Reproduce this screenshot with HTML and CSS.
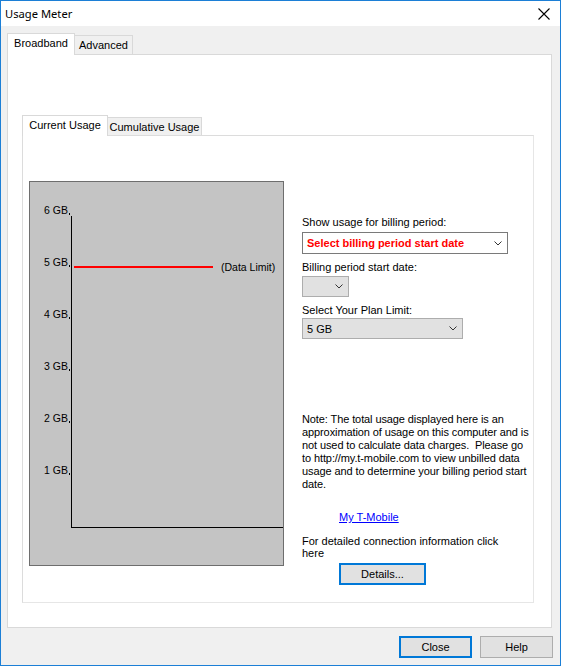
FILE: index.html
```html
<!DOCTYPE html>
<html>
<head>
<meta charset="utf-8">
<title>Usage Meter</title>
<link rel="stylesheet" href="styles.css">
</head>
<body>
<div class="window">
  <div class="titlebar">
    <span class="title">Usage Meter</span>
    <svg class="close-x" width="12" height="12" viewBox="0 0 12 12"><path d="M0.5 0.5 L11.5 11.5 M11.5 0.5 L0.5 11.5" stroke="#000" stroke-width="1.1" fill="none"/></svg>
  </div>
  <div class="client">
    <div class="tabstrip outer-tabs">
      <div class="tab selected">Broadband</div>
      <div class="tab">Advanced</div>
    </div>
    <div class="outer-panel">
      <div class="tabstrip inner-tabs">
        <div class="tab selected">Current Usage</div>
        <div class="tab">Cumulative Usage</div>
      </div>
      <div class="inner-panel">
        <div class="chart">
          <svg class="chart-svg" width="253" height="383" viewBox="0 0 253 383">
            <g class="axis-labels">
              <text x="38" y="32" text-anchor="end">6 GB</text>
              <text x="38" y="84" text-anchor="end">5 GB</text>
              <text x="38" y="136" text-anchor="end">4 GB</text>
              <text x="38" y="188" text-anchor="end">3 GB</text>
              <text x="38" y="240" text-anchor="end">2 GB</text>
              <text x="38" y="292" text-anchor="end">1 GB</text>
            </g>
            <g fill="#000">
              <rect x="39" y="31" width="1" height="2"/>
              <rect x="39" y="83" width="1" height="2"/>
              <rect x="39" y="135" width="1" height="2"/>
              <rect x="39" y="187" width="1" height="2"/>
              <rect x="39" y="239" width="1" height="2"/>
              <rect x="39" y="291" width="1" height="2"/>
              <rect x="41" y="34" width="1" height="312"/>
              <rect x="41" y="345" width="212" height="1"/>
            </g>
            <rect x="44" y="84" width="139" height="2" fill="#ff0000"/>
            <text class="limit-label" x="191" y="89">(Data Limit)</text>
          </svg>
        </div>
        <div class="side">
          <div class="label l1">Show usage for billing period:</div>
          <div class="combo combo-white dd1">
            <span class="combo-text red">Select billing period start date</span>
            <svg class="chev" width="8" height="5" viewBox="0 0 8 5"><path d="M0.5 0.5 L4 4 L7.5 0.5" stroke="#333" stroke-width="1" fill="none"/></svg>
          </div>
          <div class="label l2">Billing period start date:</div>
          <div class="combo combo-gray dd2">
            <span class="combo-text"></span>
            <svg class="chev" width="8" height="5" viewBox="0 0 8 5"><path d="M0.5 0.5 L4 4 L7.5 0.5" stroke="#333" stroke-width="1" fill="none"/></svg>
          </div>
          <div class="label l3">Select Your Plan Limit:</div>
          <div class="combo combo-gray dd3">
            <span class="combo-text">5 GB</span>
            <svg class="chev" width="8" height="5" viewBox="0 0 8 5"><path d="M0.5 0.5 L4 4 L7.5 0.5" stroke="#333" stroke-width="1" fill="none"/></svg>
          </div>
          <div class="note">Note: The total usage displayed here is an<br>approximation of usage on this computer and is<br>not used to calculate data charges.&nbsp; Please go<br>to http://my.t-mobile.com to view unbilled data<br>usage and to determine your billing period start<br>date.</div>
          <a class="link" href="#">My T-Mobile</a>
          <div class="detail-text">For detailed connection information click<br>here</div>
          <button class="btn btn-default details">Details...</button>
        </div>
      </div>
    </div>
    <div class="buttons">
      <button class="btn btn-default">Close</button>
      <button class="btn">Help</button>
    </div>
  </div>
</div>
</body>
</html>
```
FILE: styles.css
```css
* { box-sizing: border-box; }
html, body { margin: 0; padding: 0; }
body {
  width: 561px;
  height: 666px;
  overflow: hidden;
  background: #f0f0f0;
  font-family: "Liberation Sans", Arial, sans-serif;
  font-size: 11px;
  color: #000;
}
.window {
  width: 561px;
  height: 666px;
  border: 1px solid #1c7fd6;
  background: #f0f0f0;
  display: flex;
  flex-direction: column;
}
.titlebar {
  height: 25px;
  flex: none;
  background: #fff;
  display: flex;
  align-items: center;
  justify-content: space-between;
  padding: 0 10px 0 4px;
}
.title {
  font-family: "Noto Sans", "Segoe UI", sans-serif;
  font-size: 11.2px;
  color: #000;
}
.close-x { display: block; }
.client {
  flex: 1;
  padding: 7px 8px 0 6px;
  display: flex;
  flex-direction: column;
}
.tabstrip {
  display: flex;
  align-items: flex-start;
  flex: none;
}
.tab {
  border: 1px solid #d9d9d9;
  border-bottom: none;
  text-align: center;
  white-space: nowrap;
}
.tab.selected {
  background: #fff;
  position: relative;
  z-index: 1;
}
.tab:not(.selected) {
  background: #f0f0f0;
  border-left: none;
}
.outer-tabs { height: 21px; }
.outer-tabs .tab {
  font-size: 11px;
}
.outer-tabs .tab.selected {
  width: 68px;
  height: 22px;
  line-height: 19px;
}
.outer-tabs .tab:not(.selected) {
  width: 58px;
  height: 19px;
  margin-top: 2px;
  line-height: 19px;
}
.outer-panel {
  width: 545px;
  height: 574px;
  flex: none;
  background: #fff;
  border: 1px solid #d9d9d9;
  padding: 60px 17px 24px 14px;
}
.inner-tabs { height: 20px; }
.inner-tabs .tab.selected {
  width: 86px;
  height: 21px;
  line-height: 19px;
}
.inner-tabs .tab:not(.selected) {
  width: 94px;
  height: 18px;
  margin-top: 2px;
  line-height: 18px;
}
.inner-panel {
  width: 512px;
  height: 468px;
  border: 1px solid #dcdcdc;
  border-right-color: #e6e6e6;
  border-bottom-color: #e6e6e6;
  padding: 45px 0 0 6px;
  display: flex;
  align-items: flex-start;
}
.chart {
  width: 255px;
  height: 385px;
  flex: none;
  background: #c4c4c4;
  border: 1px solid #6e6e6e;
}
.chart-svg {
  display: block;
  font-family: "Liberation Sans", Arial, sans-serif;
  font-size: 10.5px;
}
.chart-svg text { fill: #000; }
.side {
  margin-left: 18px;
  padding-top: 35px;
  display: flex;
  flex-direction: column;
  align-items: flex-start;
}
.label {
  line-height: 13px;
  white-space: nowrap;
}
.l2, .l3 { margin-top: 7px; }
.combo {
  display: flex;
  align-items: center;
  justify-content: space-between;
  padding: 0 5px 0 4px;
}
.combo-white {
  background: #fff;
  border: 1px solid #7a7a7a;
}
.combo-gray {
  background: #e1e1e1;
  border: 1px solid #adadad;
}
.combo-text { white-space: nowrap; }
.red { color: #ff0000; font-weight: bold; }
.chev { display: block; flex: none; }
.dd1 { width: 206px; height: 22px; margin-top: 3px; }
.dd2 { width: 47px; height: 21px; margin-top: 2px; }
.dd3 { width: 161px; height: 21px; margin-top: 1px; }
.note {
  margin-top: 74px;
  line-height: 13px;
  white-space: nowrap;
  letter-spacing: -0.1px;
}
.link {
  margin-top: 20px;
  margin-left: 37px;
  line-height: 13px;
  color: #0000ff;
  text-decoration: underline;
}
.detail-text {
  margin-top: 11px;
  line-height: 12px;
  white-space: nowrap;
}
.btn {
  font-family: "Liberation Sans", Arial, sans-serif;
  font-size: 11px;
  color: #000;
  background: #e1e1e1;
  border: 1px solid #adadad;
  width: 73px;
  height: 22px;
  padding: 0;
  margin: 0;
}
.btn-default { border: 2px solid #0078d7; }
.details {
  width: 87px;
  margin-top: 4px;
  margin-left: 37px;
}
.buttons {
  display: flex;
  justify-content: flex-end;
  gap: 8px;
  margin-top: 8px;
  margin-right: -1px;
}
```
